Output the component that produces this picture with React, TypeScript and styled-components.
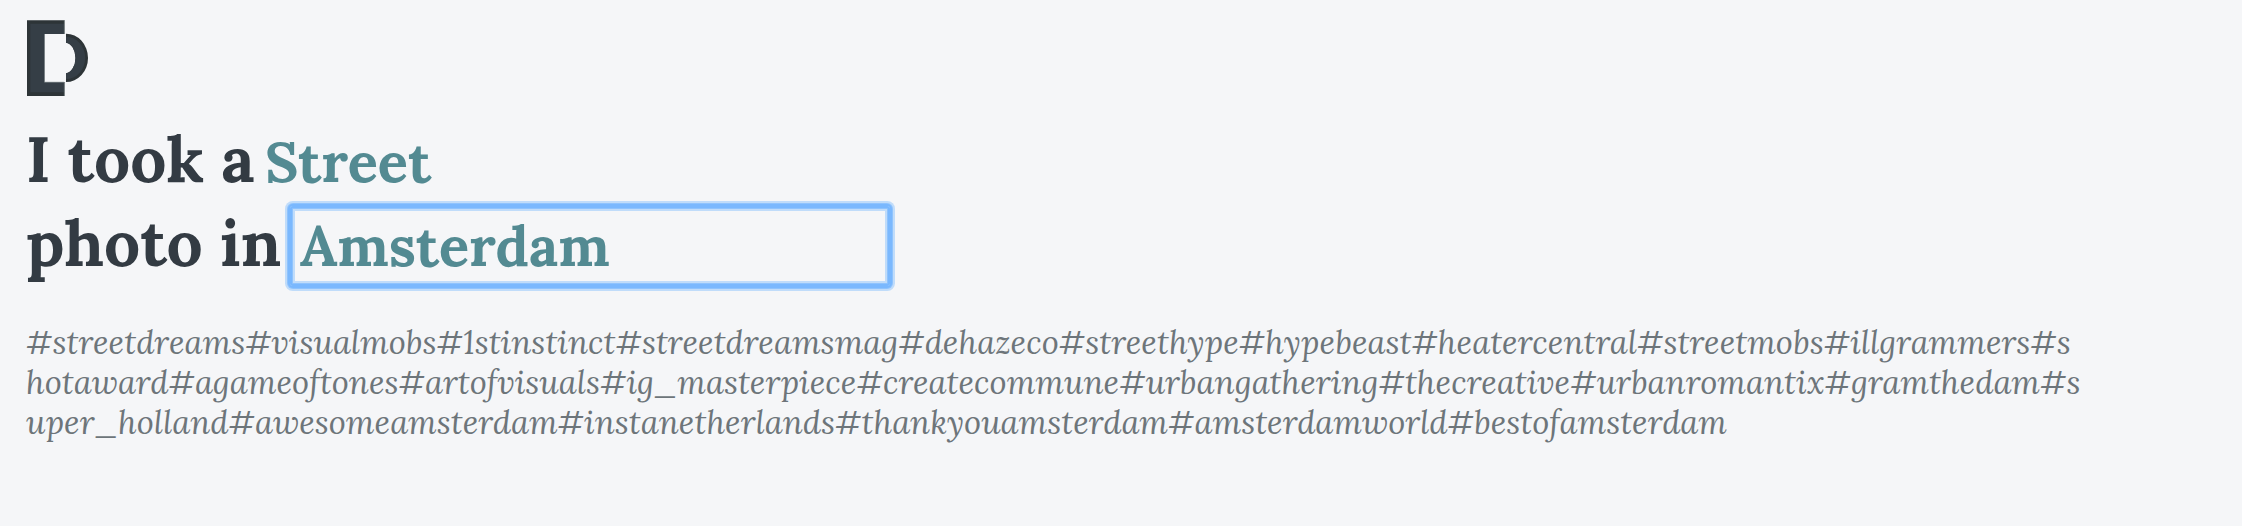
import React, { useState } from 'react';
import styled, { createGlobalStyle, css } from 'styled-components';

const GlobalStyle = createGlobalStyle`
  body {
    margin: 0;
    background-color: #f5f6f8;
    font-family: Lora, 'Liberation Serif', serif;
  }
`;

const Page = styled.main`
  box-sizing: border-box;
  min-height: 526px;
  padding: 20px 26px;
  background-color: #f5f6f8;
`;

const LogoIcon = styled.svg`
  display: block;
  width: 64px;
  height: 76px;
  margin-bottom: 24px;
`;

const SentenceRow = styled.div`
  display: flex;
  align-items: center;
  height: 84px;
`;

const Label = styled.label<{ $width: number }>`
  width: ${({ $width }) => $width}px;
  padding-bottom: 5px;
  color: #333b43;
  font-size: 64px;
  font-weight: bold;
  line-height: 77px;
  white-space: nowrap;
`;

const focusRing = css`
  border-radius: 3px;
  box-shadow: 0 0 0 2px #7ab8fe, 0 0 0 3px #8fc3fd, 0 0 0 5px #c0dcfa, inset 0 0 0 2px #7ab8fe,
    inset 0 0 0 3px #8fc3fd, inset 0 0 0 5px #c0dcfa;
`;

const WordInput = styled.input<{ $active: boolean }>`
  box-sizing: border-box;
  width: 600px;
  height: 80px;
  padding: 0 4px 2px 10px;
  border: none;
  outline: none;
  background: transparent;
  color: #538a92;
  caret-color: transparent;
  font-family: inherit;
  font-size: 56px;
  font-weight: bold;
  ${({ $active }) => $active && focusRing}
`;

const TagList = styled.p`
  width: 2060px;
  margin: 34px 0 0;
  color: #6d757a;
  font-size: 32.75px;
  font-style: italic;
  line-height: 40px;
  word-break: break-all;
`;

const tags = [
  'streetdreams',
  'visualmobs',
  '1stinstinct',
  'streetdreamsmag',
  'dehazeco',
  'streethype',
  'hypebeast',
  'heatercentral',
  'streetmobs',
  'illgrammers',
  'shotaward',
  'agameoftones',
  'artofvisuals',
  'ig_masterpiece',
  'createcommune',
  'urbangathering',
  'thecreative',
  'urbanromantix',
  'gramthedam',
  'super_holland',
  'awesomeamsterdam',
  'instanetherlands',
  'thankyouamsterdam',
  'amsterdamworld',
  'bestofamsterdam',
];

const Logo = () => (
  <LogoIcon viewBox="0 0 64 76" aria-label="Logo">
    <path d="M1 0.3H38.7V14H18.7V62H38.7V76H1Z" fill="#2d3437" />
    <path d="M4.3 3.7H38V14H18.3V62H38V72.3H4.3Z" fill="#353e46" />
    <path d="M38.4 0V14M38.4 62V76M18.5 14V62.2H38" fill="none" stroke="#8b9497" strokeWidth="0.7" />
    <path d="M40 13.7A22 24.2 0 0 1 40 62.1V53.2A10.3 15.3 0 0 0 40 22.7Z" fill="#2d3437" />
    <path d="M40 16.7A19.2 21.2 0 0 1 40 59.1V53.2A10.3 15.3 0 0 0 40 22.7Z" fill="#353e46" />
  </LogoIcon>
);

const App = () => {
  const [style, setStyle] = useState('Street');
  const [city, setCity] = useState('Amsterdam');
  const [activeField, setActiveField] = useState('city');

  return (
    <>
      <GlobalStyle />
      <Page>
        <Logo />
        <SentenceRow>
          <Label htmlFor="style" $width={229}>
            I took a
          </Label>
          <WordInput
            id="style"
            value={style}
            onChange={(e) => setStyle(e.target.value)}
            onFocus={() => setActiveField('style')}
            $active={activeField === 'style'}
          />
        </SentenceRow>
        <SentenceRow>
          <Label htmlFor="city" $width={264}>
            photo in
          </Label>
          <WordInput
            id="city"
            value={city}
            onChange={(e) => setCity(e.target.value)}
            onFocus={() => setActiveField('city')}
            $active={activeField === 'city'}
          />
        </SentenceRow>
        <TagList>{tags.map((tag) => `#${tag}`).join('')}</TagList>
      </Page>
    </>
  );
};

export default App;
